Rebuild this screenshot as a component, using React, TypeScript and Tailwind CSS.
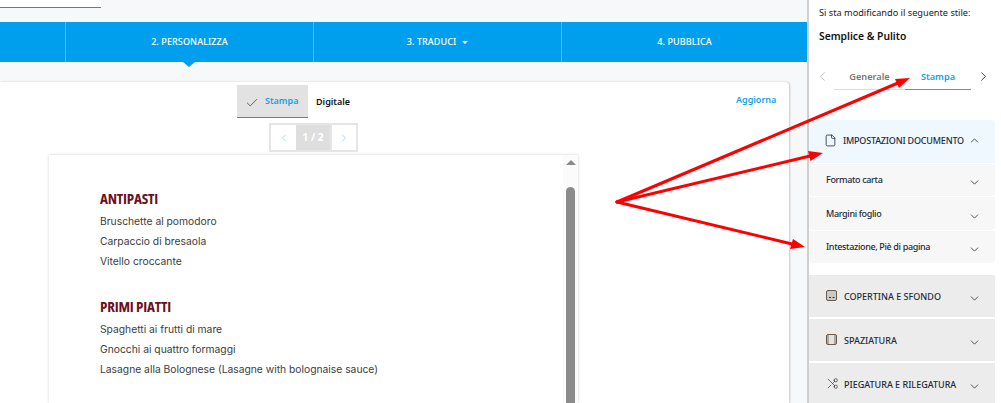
import { Check, ChevronDown, ChevronLeft, ChevronRight, ChevronUp, File, Scissors } from 'lucide-react';

const ui = "font-['Noto_Sans','Open_Sans',sans-serif]";

function Arrows() {
  return (
    <svg className="absolute left-0 top-0 pointer-events-none" width="1001" height="403" viewBox="0 0 1001 403">
      <g fill="#ff0000" stroke="#ff0000" strokeWidth="3" strokeLinecap="round">
        <line x1="617" y1="202" x2="898" y2="83" />
        <line x1="617" y1="202" x2="810" y2="156" />
        <line x1="617" y1="202" x2="792" y2="244" />
        <g stroke="none">
          <polygon points="910,78 899,88 895,79" />
          <polygon points="823,153 810.5,161 808,151" />
          <polygon points="805,247 790,249 793,239" />
        </g>
      </g>
    </svg>
  );
}

function SubRow({ label, h }: { label: string; h: string }) {
  return (
    <div className={`flex items-center justify-between bg-[#f7f7f7] pl-[17px] pr-[14px] rounded-b-sm ${h}`}>
      <span className="text-[9px] font-medium text-[#1d2b3a] leading-none mt-[-1px] tracking-[-0.35px]">{label}</span>
      <ChevronDown className="w-[13px] h-[13px] text-[#333] mt-[5px]" strokeWidth={1.5} />
    </div>
  );
}

function Section({ label, icon }: { label: string; icon: React.ReactNode }) {
  return (
    <div className="flex items-center h-[42px] bg-[#ececec] pl-[17px] pr-[14px]">
      <span className="w-[18px] mt-[-2px] flex">{icon}</span>
      <span className="text-[9px] font-medium text-[#1d2b3a] leading-none">{label}</span>
      <ChevronDown className="w-[13px] h-[13px] text-[#333] ml-auto mt-[5px]" strokeWidth={1.5} />
    </div>
  );
}

export default function App() {
  return (
    <div className={`relative flex w-[1001px] h-[403px] overflow-hidden bg-white ${ui}`}>
      <div className="flex flex-col w-[807px] bg-[#f7f8fa]">
        <div className="h-[22px] shrink-0">
          <div className="w-[101px] h-[8px] bg-white border-b border-[#777]" />
        </div>
        <div className="relative flex h-10 shrink-0 bg-[#009fee] text-white text-[9px] font-medium tracking-[0.1px]">
          <div className="w-[66px] border-r border-[#4dbcf3]" />
          <div className="w-[248px] border-r border-[#4dbcf3] flex items-center justify-center">2. PERSONALIZZA</div>
          <div className="w-[248px] border-r border-[#4dbcf3] flex items-center justify-center gap-[6px]">
            3. TRADUCI
            <span className="w-0 h-0 border-x-[3px] border-x-transparent border-t-[3px] border-t-white" />
          </div>
          <div className="flex-1 flex items-center justify-center">4. PUBBLICA</div>
          <span className="absolute left-[183px] top-10 w-0 h-0 border-x-[6px] border-x-transparent border-t-[5px] border-t-[#009fee]" />
        </div>
        <div className="h-5 shrink-0" />
        <div className="flex-1 min-h-0 w-[789px] bg-white rounded-tr-sm shadow-[1px_0_2px_rgba(0,0,0,0.2)] flex flex-col">
          <div className="relative h-[41px] shrink-0 pt-[3px] text-[9px] font-semibold">
            <div className="ml-[237px] flex items-center h-[33px]">
              <div className="flex items-center w-[71px] h-[33px] bg-[#e2e2e2] border-b border-[#0a9cea] pl-2 gap-[6px]">
                <Check className="w-[14px] h-[14px] text-[#333] mt-[3px]" strokeWidth={1.25} />
                <span className="text-[#139fea]">Stampa</span>
              </div>
              <span className="ml-2 text-[#111]">Digitale</span>
            </div>
            <span className="absolute left-[736px] top-[11px] text-[#139fea]">Aggiorna</span>
          </div>
          <div className="flex h-[29px] shrink-0 ml-[269px] w-[89px] border-2 border-[#e5e5e5]">
            <div className="w-[25px] flex items-center justify-center text-[#a8dcfa]">
              <ChevronLeft className="w-3 h-3" strokeWidth={2} />
            </div>
            <div className="w-[34px] bg-[#dedede] flex items-center justify-center text-[10px] font-bold text-white">1 / 2</div>
            <div className="flex-1 border-l-2 border-[#e5e5e5] flex items-center justify-center text-[#a8dcfa]">
              <ChevronRight className="w-3 h-3" strokeWidth={2} />
            </div>
          </div>
          <div className="relative ml-[49px] mt-[3px] w-[529px] flex-1 min-h-0 bg-white shadow-[0_0_3px_rgba(0,0,0,0.18)] pl-[51px] pt-[34px] overflow-hidden">
            <h2 className="font-['Open_Sans',sans-serif] font-bold text-[15px] leading-[18px] text-[#6e0f23] tracking-[-0.2px] [font-stretch:75%]">ANTIPASTI</h2>
            <ul className="mt-[4px] font-['Inter',sans-serif] text-[10.3px] text-[#3c3c3c]">
              <li className="h-5 leading-5">Bruschette al pomodoro</li>
              <li className="h-5 leading-5">Carpaccio di bresaola</li>
              <li className="h-5 leading-5">Vitello croccante</li>
            </ul>
            <h2 className="mt-[26px] font-['Open_Sans',sans-serif] font-bold text-[15px] leading-[18px] text-[#6e0f23] tracking-[-0.2px] [font-stretch:75%]">PRIMI PIATTI</h2>
            <ul className="mt-[4px] font-['Inter',sans-serif] text-[10.3px] text-[#3c3c3c]">
              <li className="h-5 leading-5">Spaghetti ai frutti di mare</li>
              <li className="h-5 leading-5">Gnocchi ai quattro formaggi</li>
              <li className="h-5 leading-5">Lasagne alla Bolognese (Lasagne with bolognaise sauce)</li>
            </ul>
            <div className="absolute right-0 top-0 bottom-0 w-[15px] bg-[#fbfbfb] flex flex-col items-center">
              <span className="mt-[5px] w-0 h-0 border-x-[5px] border-x-transparent border-b-[5px] border-b-[#888]" />
              <span className="mt-[22px] w-[9px] flex-1 bg-[#8c8c8c] rounded-t-[5px]" />
            </div>
          </div>
        </div>
      </div>

      <aside className="w-[194px] border-l-2 border-[#cfcfcf] shrink-0 pr-[6px] bg-white">
        <p className="pl-[10px] pt-[6px] text-[9.2px] leading-[14px] text-[#222]">Si sta modificando il seguente stile:</p>
        <p className="pl-[10px] mt-[9px] text-[10.3px] leading-[15px] font-semibold text-[#111]">Semplice &amp; Pulito</p>
        <div className="flex items-center mt-[24px] h-[22px] text-[9.2px] font-semibold relative">
          <ChevronLeft className="absolute left-[6px] top-[1px] w-[15px] h-[15px] text-[#bbb]" strokeWidth={1.5} />
          <div className="ml-[25px] w-[71px] h-[22px] border-b border-[#d5dbe6] text-center text-[#777] leading-[17px]">Generale</div>
          <div className="w-[66px] h-[22px] border-b border-[#3a9fe0] text-center text-[#139fea] leading-[17px]">Stampa</div>
          <ChevronRight className="absolute left-[167px] top-[1px] w-[15px] h-[15px] text-[#333]" strokeWidth={1.5} />
        </div>
        <div className="mt-[30px] flex items-center h-[43px] bg-[#f0f8ff] pl-[15px] pr-[14px] rounded-t-sm">
          <File className="w-[13px] h-[13px] text-[#1d2b3a] mr-[6px] mt-[-3px]" strokeWidth={1.5} />
          <span className="text-[9px] font-medium text-[#1d2b3a] leading-none whitespace-nowrap mt-[-2px] tracking-[-0.2px]">IMPOSTAZIONI DOCUMENTO</span>
          <ChevronUp className="w-[13px] h-[13px] text-[#333] ml-auto mt-[-3px]" strokeWidth={1.5} />
        </div>
        <div className="flex flex-col gap-px mt-px">
          <SubRow label="Formato carta" h="h-[32px]" />
          <SubRow label="Margini foglio" h="h-[33px]" />
          <SubRow label="Intestazione, Piè di pagina" h="h-[32px]" />
        </div>
        <div className="flex flex-col gap-[2px] mt-[12px]">
          <Section
            label="COPERTINA E SFONDO"
            icon={
              <svg width="11" height="11" viewBox="0 0 11 11" fill="none">
                <rect x="0.5" y="0.5" width="10" height="10" rx="1.5" fill="#c9c9c9" stroke="#6b5a4a" />
                <rect x="3" y="7" width="2" height="1" fill="#333" />
                <rect x="6.5" y="7" width="2" height="1" fill="#333" />
              </svg>
            }
          />
          <Section
            label="SPAZIATURA"
            icon={
              <svg width="11" height="11" viewBox="0 0 11 11" fill="none">
                <rect x="0.5" y="0.5" width="10" height="10" rx="1.5" fill="#a9a9a9" stroke="#6b5a4a" />
                <rect x="3" y="1" width="5" height="9" fill="#e4e4e4" />
              </svg>
            }
          />
          <Section label="PIEGATURA E RILEGATURA" icon={<Scissors className="w-[13px] h-[13px] text-[#333] -scale-x-100" strokeWidth={1.25} />} />
        </div>
      </aside>
      <Arrows />
    </div>
  );
}
